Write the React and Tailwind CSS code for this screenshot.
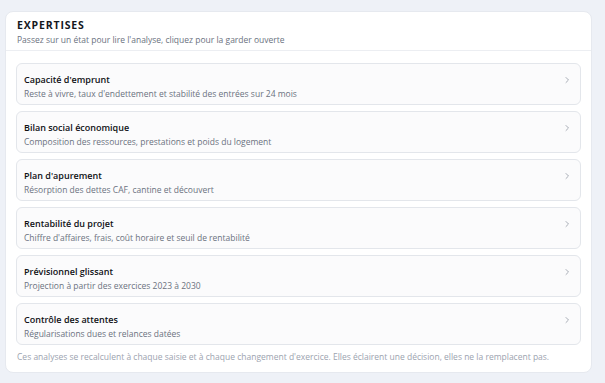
import React from "react";

const items = [
  ["Capacité d'emprunt", "Reste à vivre, taux d'endettement et stabilité des entrées sur 24 mois"],
  ["Bilan social économique", "Composition des ressources, prestations et poids du logement"],
  ["Plan d'apurement", "Résorption des dettes CAF, cantine et découvert"],
  ["Rentabilité du projet", "Chiffre d'affaires, frais, coût horaire et seuil de rentabilité"],
  ["Prévisionnel glissant", "Projection à partir des exercices 2023 à 2030"],
  ["Contrôle des attentes", "Régularisations dues et relances datées"],
];

function Chevron() {
  return (
    <svg width="6" height="8" viewBox="0 0 6 8" fill="none" className="shrink-0 mt-[3px]">
      <path d="M2 1.5 L4.5 4 L2 6.5" stroke="#a8adb6" strokeWidth="1" strokeLinecap="round" strokeLinejoin="round" />
    </svg>
  );
}

export default function App() {
  return (
    <div
      className="w-[605px] h-[383px] bg-[#eef1f7] pt-[11px] pl-[5px] overflow-hidden"
      style={{ fontFamily: '"Open Sans", "Noto Sans", sans-serif' }}
    >
      <div className="w-[587px] h-[362px] bg-white rounded-[8px] border border-[#e6e9ef] flex flex-col">
        <div className="px-[11px] pt-[5px] pb-[3px] border-b border-[#eceef2]">
          <div className="text-[10.5px] font-bold tracking-[0.08em] text-[#15181e] leading-[16px]">EXPERTISES</div>
          <div className="text-[8.5px] text-[#6b7280] leading-[14px]">
            Passez sur un état pour lire l'analyse, cliquez pour la garder ouverte
          </div>
        </div>
        <div className="px-[10px] pt-[12px] flex flex-col gap-[6px]">
          {items.map(([t, s]) => (
            <div
              key={t}
              className="h-[42px] rounded-[6px] border border-[#e3e6eb] bg-[#fbfbfc] pl-[7px] pr-[10px] pt-[9px] flex items-start justify-between"
            >
              <div className="flex flex-col">
                <div className="text-[9px] font-semibold text-[#0f1115] leading-[14px]">{t}</div>
                <div className="text-[8.5px] text-[#6b7280] leading-[14px]">{s}</div>
              </div>
              <Chevron />
            </div>
          ))}
        </div>
        <div className="px-[11px] mt-[5px] text-[8.5px] text-[#9ca3af] leading-[13px] whitespace-nowrap">
          Ces analyses se recalculent à chaque saisie et à chaque changement d'exercice. Elles éclairent une décision, elles ne la remplacent pas.
        </div>
      </div>
    </div>
  );
}
